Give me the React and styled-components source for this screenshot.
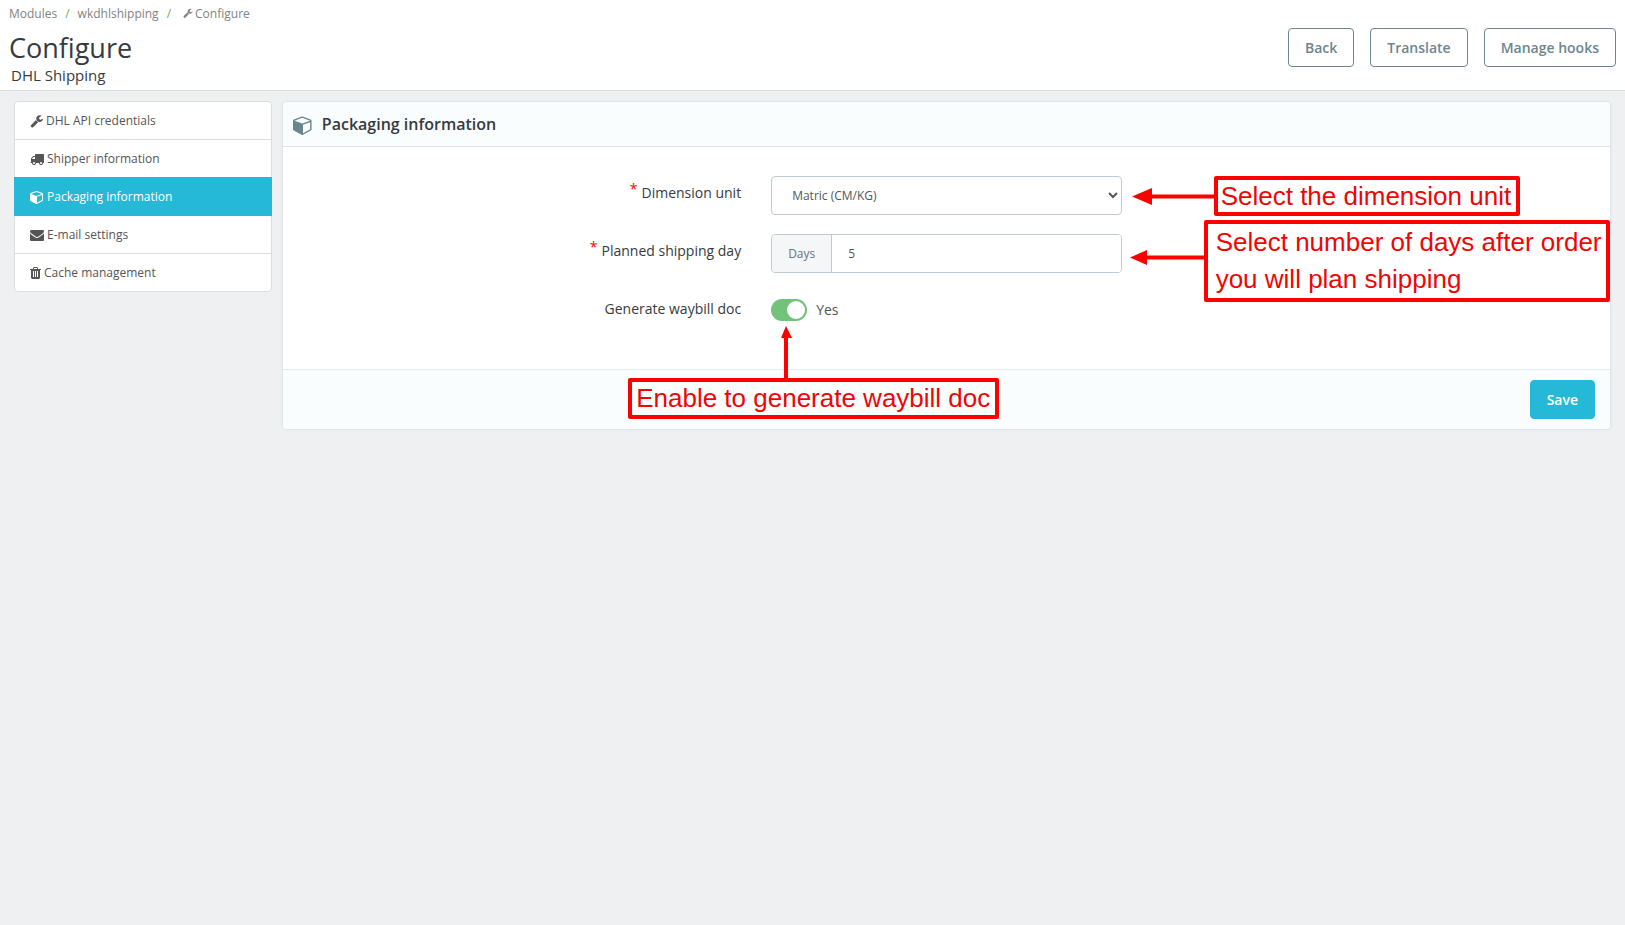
import styled, { createGlobalStyle } from "styled-components";
import { useState } from "react";

const GlobalStyle = createGlobalStyle`
  * {
    box-sizing: border-box;
  }

  body {
    margin: 0;
    background-color: #eef0f2;
    color: #363a41;
    font-family: "Open Sans", "Liberation Sans", sans-serif;
    font-size: 14px;
  }
`;

const StyledHeader = styled.header`
  display: flex;
  justify-content: space-between;
  align-items: flex-start;
  padding: 5px 9px 6px;
  background-color: #ffffff;
  border-bottom: 1px solid #d8dddf;
`;

const StyledBreadcrumb = styled.ol`
  display: flex;
  align-items: center;
  margin: 0;
  padding: 0;
  list-style: none;
  font-size: 12px;
  line-height: 18px;

  li + li::before {
    content: "/";
    padding: 0 8px;
    color: #6bb050;
  }

  a {
    color: #828385;
    text-decoration: none;
  }

  svg {
    margin: 0 2px 0 4px;
  }
`;

const StyledTitle = styled.h1`
  margin: 7px 0 0;
  font-size: 27px;
  line-height: 36px;
  font-weight: 400;
`;

const StyledSubtitle = styled.p`
  margin: 0;
  padding-left: 2px;
  font-size: 15px;
  line-height: 18px;
`;

const StyledToolbar = styled.div`
  display: flex;
  gap: 16px;
  padding-top: 23px;
`;

const StyledButton = styled.button`
  padding: 8px 16px;
  border: 1px solid ${(props) => (props.$primary ? "#25b9d7" : "#6c868e")};
  border-radius: 4px;
  background-color: ${(props) => (props.$primary ? "#25b9d7" : "#ffffff")};
  color: ${(props) => (props.$primary ? "#ffffff" : "#6c868e")};
  font-family: inherit;
  font-size: 14px;
  font-weight: 600;
  line-height: 21px;
  cursor: pointer;
`;

const StyledMain = styled.main`
  display: grid;
  grid-template-columns: 1fr 5fr;
  align-items: start;
  padding: 10px 9px;
`;

const StyledMenu = styled.nav`
  display: flex;
  flex-direction: column;
  margin: 0 5px;
`;

const StyledMenuLink = styled.a`
  display: flex;
  align-items: center;
  gap: 3px;
  height: 39px;
  margin-bottom: -1px;
  padding: 0 15px;
  border: 1px solid ${(props) => (props.$active ? "#25b9d7" : "#dddddd")};
  background-color: ${(props) => (props.$active ? "#25b9d7" : "#ffffff")};
  color: ${(props) => (props.$active ? "#ffffff" : "#555555")};
  font-size: 12px;
  text-decoration: none;
  z-index: ${(props) => (props.$active ? 1 : 0)};

  &:first-child {
    border-radius: 4px 4px 0 0;
  }

  &:last-child {
    border-radius: 0 0 4px 4px;
  }
`;

const StyledPanel = styled.form`
  margin: 1px 6px 0;
  border-radius: 4px;
  background-color: #ffffff;
  box-shadow: 0 0 2px 1px #dbe3e6;
`;

const StyledPanelHeading = styled.h2`
  display: flex;
  align-items: center;
  gap: 9px;
  height: 45px;
  margin: 0;
  padding: 0 10px;
  border-bottom: 1px solid #dbe3e6;
  border-radius: 4px 4px 0 0;
  background-color: #fafdfe;
  font-size: 16px;
  font-weight: 600;

  svg {
    margin-top: 2px;
    color: #6c868e;
  }
`;

const StyledPanelBody = styled.div`
  padding: 29px 0 38px;
`;

const StyledPanelFooter = styled.div`
  display: flex;
  justify-content: flex-end;
  padding: 10px 15px;
  border-top: 1px solid #e6ecee;
  border-radius: 0 0 4px 4px;
  background-color: #fafdfe;
`;

const StyledRow = styled.div`
  display: grid;
  grid-template-columns: 17fr 13fr 17fr;
  column-gap: 30px;
  min-height: 39px;

  & + & {
    margin-top: 19px;
  }
`;

const StyledLabel = styled.label`
  padding-top: 7px;
  line-height: 20px;
  text-align: right;
`;

const StyledRequired = styled.span`
  margin-right: 4px;
  color: #ff0000;
  vertical-align: 4px;
  line-height: 0;
`;

const StyledControl = styled.div`
  position: relative;
`;

const StyledSelect = styled.select`
  width: 100%;
  height: 39px;
  padding: 0 16px;
  border: 1px solid #bbcdd2;
  border-radius: 4px;
  background-color: #ffffff;
  color: #555555;
  font-family: inherit;
  font-size: 12px;
`;

const StyledInputGroup = styled.div`
  display: flex;
  height: 39px;
  border: 1px solid #bbcdd2;
  border-radius: 4px;
  overflow: hidden;
`;

const StyledAddon = styled.span`
  display: flex;
  align-items: center;
  padding: 0 16px;
  border-right: 1px solid #bbcdd2;
  background-color: #f4f6f8;
  color: #6c7478;
  font-size: 12px;
`;

const StyledInput = styled.input`
  flex: 1;
  min-width: 0;
  padding: 0 16px;
  border: none;
  color: #555555;
  font-family: inherit;
  font-size: 12px;
`;

const StyledSwitch = styled.div`
  display: flex;
  align-items: center;
  gap: 9px;
  padding-top: 7px;
  line-height: 22px;
  color: #555555;

  input {
    appearance: none;
    width: 36px;
    height: 22px;
    margin: 0;
    padding: 2px;
    border-radius: 11px;
    background-color: #b3c7cd;
    cursor: pointer;
  }

  input::before {
    content: "";
    display: block;
    width: 18px;
    height: 18px;
    border-radius: 50%;
    background-color: #ffffff;
  }

  input:checked {
    background-color: #72c279;
  }

  input:checked::before {
    margin-left: auto;
  }
`;

const StyledNote = styled.div`
  position: absolute;
  top: ${(props) => props.$top}px;
  left: ${(props) => props.$left};
  z-index: 2;
  display: flex;
  flex-direction: ${(props) => (props.$vertical ? "column" : "row")};
  align-items: center;

  svg {
    flex: none;
    margin-bottom: ${(props) => props.$lift || 0}px;
  }
`;

const StyledNoteText = styled.p`
  margin: 0;
  padding: ${(props) => props.$padding};
  border: 4px solid #ff0000;
  border-radius: 2px;
  color: #f00505;
  font-family: "Liberation Sans", Arial, sans-serif;
  font-size: 26px;
  line-height: ${(props) => (props.$tall ? 37 : 32)}px;
  white-space: nowrap;
`;

const icons = {
  wrench:
    "M1092 1052l-682 682q-37 37-90 37-52 0-91-37l-106-108q-38-36-38-90 0-53 38-91l681-681q39 98 114.5 173.5t173.5 114.5zm634-435q0 39-23 106-47 134-164.5 217.5t-258.5 83.5q-185 0-316.5-131.5t-131.5-316.5 131.5-316.5 316.5-131.5q58 0 121.5 16.5t107.5 46.500q16 11 16 28t-16 28l-293 169v224l193 107q5-3 79-48.5t135.5-81 70.5-35.5q15 0 23.5 10t8.500 25z",
  truck:
    "M640 1408q0-52-38-90t-90-38-90 38-38 90 38 90 90 38 90-38 38-90zm-384-512h384v-256h-158q-13 0-22 9l-195 195q-9 9-9 22v30zm1280 512q0-52-38-90t-90-38-90 38-38 90 38 90 90 38 90-38 38-90zm256-1088v1024q0 15-4 26.5t-13.5 18.5-16.5 11.5-23.5 6-22.5 2-25.5 0-22.5-.5q0 106-75 181t-181 75-181-75-75-181h-384q0 106-75 181t-181 75-181-75-75-181h-64q-3 0-22.5.5t-25.5 0-22.5-2-23.5-6-16.5-11.5-13.5-18.5-4-26.5q0-26 19-45t45-19v-320q0-8-.5-35t0-38 2.5-34.5 6.5-37 14-30.5 22.5-30l198-198q19-19 50.5-32t58.5-13h160v-192q0-26 19-45t45-19h1024q26 0 45 19t19 45z",
  cube: "M896 1629l640-349v-636l-640 233v752zm-64-865l698-254-698-254-698 254zm832-252v768q0 35-18 65t-49 47l-704 384q-28 16-61 16t-61-16l-704-384q-31-17-49-47t-18-65v-768q0-40 23-73t61-47l704-256q22-8 44-8t44 8l704 256q38 14 61 47t23 73z",
  envelope:
    "M1792 710v794q0 66-47 113t-113 47h-1472q-66 0-113-47t-47-113v-794q44 49 101 87 362 246 497 345 57 42 92.5 65.5t94.5 48 110 24.5h2q51 0 110-24.5t94.5-48 92.5-65.5q170-123 498-345 57-39 100-87zm0-294q0 79-49 151t-122 123q-376 261-468 325-10 7-42.5 31t-54 38.8-52 33.2-57.5 27-50 9h-2q-23 0-50-9t-57.5-27-52-33.2-54-38.8-42.5-31q-91-64-262-182.5t-205-142.5q-62-42-117-115.5t-55-136.5q0-78 41.5-130t118.5-52h1472q65 0 112.5 47t47.5 113z",
  trash:
    "M512 1376v-704q0-14-9-23t-23-9h-64q-14 0-23 9t-9 23v704q0 14 9 23t23 9h64q14 0 23-9t9-23zm256 0v-704q0-14-9-23t-23-9h-64q-14 0-23 9t-9 23v704q0 14 9 23t23 9h64q14 0 23-9t9-23zm256 0v-704q0-14-9-23t-23-9h-64q-14 0-23 9t-9 23v704q0 14 9 23t23 9h64q14 0 23-9t9-23zm-544-992h448l-48-117q-7-9-17-11h-317q-10 2-17 11zm928 32v64q0 14-9 23t-23 9h-96v948q0 83-47 143.5t-113 60.5h-832q-66 0-113-58.5t-47-141.5v-952h-96q-14 0-23-9t-9-23v-64q0-14 9-23t23-9h309l70-167q15-37 54-63t79-26h320q40 0 79 26t54 63l70 167h309q14 0 23 9t9 23z",
};

const Icon = ({ name, size = 14, box = 1792 }) => (
  <svg
    width={Math.floor((size * box) / 1792)}
    height={size}
    viewBox={`0 0 ${box} 1792`}
    fill="currentColor"
    aria-hidden="true"
  >
    <path d={icons[name]} />
  </svg>
);

const LeftArrow = ({ length, head, width }) => (
  <svg width={length} height={width} fill="#ff0000" aria-hidden="true">
    <path d={`M0 ${width / 2}L${head} 0V${width}z`} />
    <rect x={head - 1} y={width / 2 - 2} width={length - head + 1} height="4" />
  </svg>
);

const menu = [
  { label: "DHL API credentials", icon: "wrench", box: 1728 },
  { label: "Shipper information", icon: "truck" },
  { label: "Packaging information", icon: "cube", active: true },
  { label: "E-mail settings", icon: "envelope" },
  { label: "Cache management", icon: "trash", box: 1408 },
];

const App = () => {
  const [unit, setUnit] = useState("metric");
  const [days, setDays] = useState("5");
  const [waybill, setWaybill] = useState(true);

  return (
    <>
      <GlobalStyle />
      <StyledHeader>
        <div>
          <StyledBreadcrumb>
            <li>
              <a href="#modules">Modules</a>
            </li>
            <li>
              <a href="#wkdhlshipping">wkdhlshipping</a>
            </li>
            <li>
              <a href="#configure">
                <Icon name="wrench" size={10} />
                Configure
              </a>
            </li>
          </StyledBreadcrumb>
          <StyledTitle>Configure</StyledTitle>
          <StyledSubtitle>DHL Shipping</StyledSubtitle>
        </div>
        <StyledToolbar>
          <StyledButton>Back</StyledButton>
          <StyledButton>Translate</StyledButton>
          <StyledButton>Manage hooks</StyledButton>
        </StyledToolbar>
      </StyledHeader>

      <StyledMain>
        <StyledMenu>
          {menu.map((item) => (
            <StyledMenuLink key={item.label} href="#" $active={item.active}>
              <Icon name={item.icon} box={item.box} />
              {item.label}
            </StyledMenuLink>
          ))}
        </StyledMenu>

        <StyledPanel onSubmit={(e) => e.preventDefault()}>
          <StyledPanelHeading>
            <Icon name="cube" size={20} />
            Packaging information
          </StyledPanelHeading>

          <StyledPanelBody>
            <StyledRow>
              <StyledLabel htmlFor="unit">
                <StyledRequired>*</StyledRequired>
                Dimension unit
              </StyledLabel>
              <StyledControl>
                <StyledSelect
                  id="unit"
                  value={unit}
                  onChange={(e) => setUnit(e.target.value)}
                >
                  <option value="metric">Matric (CM/KG)</option>
                </StyledSelect>
                <StyledNote $top={0} $left="calc(100% + 10px)">
                  <LeftArrow length={82} head={20} width={17} />
                  <StyledNoteText $padding="0 5px 0 3px">
                    Select the dimension unit
                  </StyledNoteText>
                </StyledNote>
              </StyledControl>
            </StyledRow>

            <StyledRow>
              <StyledLabel htmlFor="days">
                <StyledRequired>*</StyledRequired>
                Planned shipping day
              </StyledLabel>
              <StyledControl>
                <StyledInputGroup>
                  <StyledAddon>Days</StyledAddon>
                  <StyledInput
                    id="days"
                    type="text"
                    value={days}
                    onChange={(e) => setDays(e.target.value)}
                  />
                </StyledInputGroup>
                <StyledNote $top={-14} $left="calc(100% + 8px)" $lift={8}>
                  <LeftArrow length={74} head={17} width={15} />
                  <StyledNoteText $tall $padding="0 4px 0 8px">
                    Select number of days after order
                    <br />
                    you will plan shipping
                  </StyledNoteText>
                </StyledNote>
              </StyledControl>
            </StyledRow>

            <StyledRow>
              <StyledLabel htmlFor="waybill">Generate waybill doc</StyledLabel>
              <StyledControl>
                <StyledSwitch>
                  <input
                    id="waybill"
                    type="checkbox"
                    checked={waybill}
                    onChange={(e) => setWaybill(e.target.checked)}
                  />
                  <span>{waybill ? "Yes" : "No"}</span>
                </StyledSwitch>
                <StyledNote $vertical $top={34} $left="-143px">
                  <svg width="67" height="52" fill="#ff0000" aria-hidden="true">
                    <path d="M1 12L6 0L12 12z" />
                    <rect x="4" y="11" width="4" height="41" />
                  </svg>
                  <StyledNoteText $padding="0 5px 1px 4px">
                    Enable to generate waybill doc
                  </StyledNoteText>
                </StyledNote>
              </StyledControl>
            </StyledRow>
          </StyledPanelBody>

          <StyledPanelFooter>
            <StyledButton $primary>Save</StyledButton>
          </StyledPanelFooter>
        </StyledPanel>
      </StyledMain>
    </>
  );
};

export default App;
